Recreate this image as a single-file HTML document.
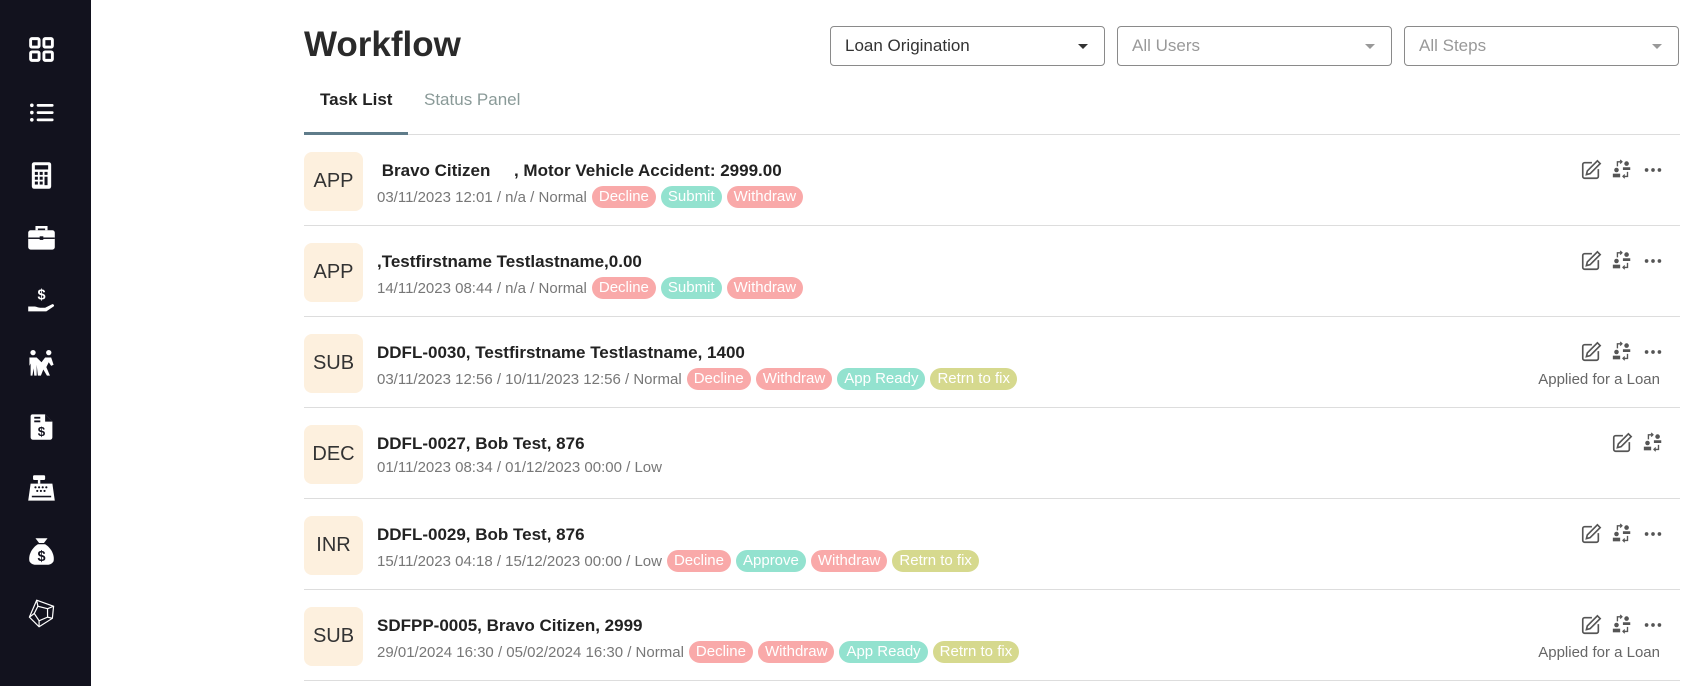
<!DOCTYPE html>
<html><head><meta charset="utf-8"><style>
*{margin:0;padding:0;box-sizing:border-box}
body{width:1698px;height:686px;overflow:hidden;background:#fff;font-family:"Liberation Sans",Arial,sans-serif;position:relative}
.sb{position:absolute;left:0;top:0;width:91px;height:686px;background:#12121e}
.sb svg{position:absolute;left:27px;width:29px;height:29px}
h1{position:absolute;left:304px;top:25px;font-size:35px;font-weight:bold;color:#2a2a2a}
.dd{position:absolute;top:26px;height:40px;width:275px;border:1px solid #8a8a8a;border-radius:4px;font-size:17px;padding:9px 14px;color:#999}
.dd:after{content:"";position:absolute;right:16px;top:17px;border-left:5px solid transparent;border-right:5px solid transparent;border-top:5px solid #999}
.dd.d1{color:#333}.dd.d1:after{border-top-color:#333}
.tab{position:absolute;top:90px;font-size:17px}
.ul{position:absolute;left:304px;top:134px;width:1376px;height:1px;background:#ddd}
.ul2{position:absolute;left:304px;top:132px;width:104px;height:3px;background:#5f7c8a}
.row{position:absolute;left:304px;width:1376px;height:91px;border-bottom:1px solid #ddd}
.bd{position:absolute;left:0;top:17px;width:59px;height:59px;border-radius:8px;background:#fdf0de;font-size:20px;color:#333;text-align:center;line-height:59px}
.t{position:absolute;left:73px;top:26px;font-size:17px;font-weight:bold;color:#222;white-space:pre}
.s{position:absolute;left:73px;top:51px;font-size:15px;color:#777;white-space:nowrap;display:flex;align-items:center}
.p{display:inline-block;height:22px;line-height:22px;border-radius:11px;padding:0 7px;color:#fff;margin-left:5px;font-size:15px}
.r{background:#f9a9a9}.g{background:#93e2cf}.y{background:#d6d98e}
.ic{position:absolute;top:24px;width:22px;height:22px}
.ap{position:absolute;right:20px;top:54px;font-size:15px;color:#666}
</style></head><body>
<div class="sb">
<svg style="top:35px" viewBox="0 0 24 24" fill="none" stroke="#fff" stroke-width="2.4"><rect x="3" y="3" width="7" height="7" rx="1"/><rect x="14" y="3" width="7" height="7" rx="1"/><rect x="3" y="14" width="7" height="7" rx="1"/><rect x="14" y="14" width="7" height="7" rx="1"/></svg>
<svg style="top:98px" viewBox="0 0 24 24" fill="#fff"><circle cx="4" cy="6" r="1.5"/><circle cx="4" cy="12" r="1.5"/><circle cx="4" cy="18" r="1.5"/><rect x="8" y="5" width="14" height="2.2" rx="1"/><rect x="8" y="11" width="14" height="2.2" rx="1"/><rect x="8" y="17" width="14" height="2.2" rx="1"/></svg>
<svg style="top:161px" viewBox="0 0 24 24"><rect x="4" y="1" width="16" height="22" rx="2" fill="#fff"/><rect x="6.5" y="3.5" width="11" height="3.5" fill="#12121e"/><g fill="#12121e"><rect x="6.5" y="9" width="2.5" height="2.5"/><rect x="10.5" y="9" width="2.5" height="2.5"/><rect x="14.5" y="9" width="2.5" height="2.5"/><rect x="6.5" y="13" width="2.5" height="2.5"/><rect x="10.5" y="13" width="2.5" height="2.5"/><rect x="14.5" y="13" width="2.5" height="7"/><rect x="6.5" y="17" width="2.5" height="2.5"/><rect x="10.5" y="17" width="2.5" height="2.5"/></g></svg>
<svg style="top:223px" viewBox="0 0 24 24"><path d="M8 6V3.5h8V6" stroke="#fff" stroke-width="2" fill="none"/><rect x="1" y="6" width="22" height="16" rx="2" fill="#fff"/><rect x="1" y="12" width="22" height="1.2" fill="#12121e"/><rect x="10.5" y="11" width="3" height="3" fill="#12121e"/></svg>
<svg style="top:286px" viewBox="0 0 24 24" fill="#fff"><text x="12" y="11" font-size="12" font-weight="bold" text-anchor="middle" fill="#fff" font-family="Liberation Sans">$</text><path d="M1 17h5c2 0 3 1 5 1h4l6-3c1 0 2 1 1 2l-6 4H1z"/></svg>
<svg style="top:349px" viewBox="0 0 24 24" fill="#fff"><circle cx="5" cy="3" r="2.2"/><circle cx="18" cy="3" r="2.2"/><path d="M2 7h6l4 4 3-4h5l2 6-2 1-2-3-2 4 3 7h-2.5l-3-5-2 5H9l-1-9v9H6l-.5-6-1 6H3V12L2 14z"/></svg>
<svg style="top:412px" viewBox="0 0 24 24"><path d="M4 2h11l6 6v13a2 2 0 0 1-2 2H5a2 2 0 0 1-2-2V4a2 2 0 0 1 1-2z" fill="#fff"/><path d="M15 2v6h6" fill="#12121e"/><rect x="6" y="4" width="5" height="1.5" fill="#12121e"/><rect x="6" y="7" width="5" height="1.5" fill="#12121e"/><text x="12" y="20" font-size="11" font-weight="bold" text-anchor="middle" fill="#12121e" font-family="Liberation Sans">$</text></svg>
<svg style="top:474px" viewBox="0 0 24 24" fill="#fff"><rect x="5" y="1" width="10" height="4" rx="1"/><rect x="9" y="5" width="2" height="3"/><path d="M3 8h18l2 14H1z"/><g fill="#12121e"><circle cx="7" cy="11" r=".9"/><circle cx="10" cy="11" r=".9"/><circle cx="13" cy="11" r=".9"/><circle cx="16" cy="11" r=".9"/><circle cx="8.5" cy="14" r=".9"/><circle cx="11.5" cy="14" r=".9"/><circle cx="14.5" cy="14" r=".9"/><rect x="4" y="18" width="16" height="1.3"/></g></svg>
<svg style="top:537px" viewBox="0 0 24 24" fill="#fff"><path d="M7 1h10l-3 4h-4z"/><path d="M9 6h6c5 3 8 9 7 14-1 2-3 3-5 3H7c-2 0-4-1-5-3C1 15 4 9 9 6z"/><text x="12" y="20" font-size="12" font-weight="bold" text-anchor="middle" fill="#12121e" font-family="Liberation Sans">$</text></svg>
<svg style="top:599px" viewBox="0 0 24 24" fill="none" stroke="#fff" stroke-width="1"><path d="M8 1l14 5-1 10-11 7-8-8z"/><path d="M9 6l8 2 0 7-7 3-4-6z"/><path d="M8 1l1 5M22 6l-5 2M21 16l-4-1M10 23l0-5M2 15l4-3"/></svg>
</div>
<h1>Workflow</h1>
<div class="dd d1" style="left:830px">Loan Origination</div>
<div class="dd" style="left:1117px">All Users</div>
<div class="dd" style="left:1404px">All Steps</div>
<div class="tab" style="left:320px;font-weight:bold;color:#222">Task List</div>
<div class="tab" style="left:424px;color:#8a9a98">Status Panel</div>
<div class="ul"></div><div class="ul2"></div>

<svg width="0" height="0" style="position:absolute"><defs>
<symbol id="ed" viewBox="0 0 24 24"><path d="M13 4H5a2 2 0 0 0-2 2v13a2 2 0 0 0 2 2h13a2 2 0 0 0 2-2v-8" fill="none" stroke="#555" stroke-width="1.8"/><path d="M19 2l3 3-11 11-4 1 1-4z" fill="none" stroke="#555" stroke-width="1.8"/></symbol>
<symbol id="us" viewBox="0 0 24 24" fill="#555"><circle cx="17" cy="5" r="2.5"/><path d="M13 9h8v3h-8z"/><circle cx="6" cy="12" r="2.5"/><path d="M2 16h8v4H2z"/><path d="M7 8V3h5" fill="none" stroke="#555" stroke-width="1.5"/><path d="M10 1l2 2-2 2" fill="none" stroke="#555" stroke-width="1.3"/><path d="M18 14v5h-5" fill="none" stroke="#555" stroke-width="1.5"/><path d="M15 17l-2 2 2 2" fill="none" stroke="#555" stroke-width="1.3"/></symbol>
<symbol id="dt" viewBox="0 0 24 24" fill="#555"><circle cx="5" cy="12" r="2"/><circle cx="12" cy="12" r="2"/><circle cx="19" cy="12" r="2"/></symbol>
</defs></svg>

<div class="row" style="top:135px"><div class="bd">APP</div><div class="t"> Bravo Citizen     , Motor Vehicle Accident: 2999.00</div><div class="s">03/11/2023 12:01 / n/a / Normal<span class="p r">Decline</span><span class="p g">Submit</span><span class="p r">Withdraw</span></div>
<svg class="ic" style="left:1276px"><use href="#ed"/></svg><svg class="ic" style="left:1307px"><use href="#us"/></svg><svg class="ic" style="left:1338px"><use href="#dt"/></svg></div>

<div class="row" style="top:226px"><div class="bd">APP</div><div class="t">,Testfirstname Testlastname,0.00</div><div class="s">14/11/2023 08:44 / n/a / Normal<span class="p r">Decline</span><span class="p g">Submit</span><span class="p r">Withdraw</span></div>
<svg class="ic" style="left:1276px"><use href="#ed"/></svg><svg class="ic" style="left:1307px"><use href="#us"/></svg><svg class="ic" style="left:1338px"><use href="#dt"/></svg></div>

<div class="row" style="top:317px"><div class="bd">SUB</div><div class="t">DDFL-0030, Testfirstname Testlastname, 1400</div><div class="s">03/11/2023 12:56 / 10/11/2023 12:56 / Normal<span class="p r">Decline</span><span class="p r">Withdraw</span><span class="p g">App Ready</span><span class="p y">Retrn to fix</span></div>
<svg class="ic" style="left:1276px"><use href="#ed"/></svg><svg class="ic" style="left:1307px"><use href="#us"/></svg><svg class="ic" style="left:1338px"><use href="#dt"/></svg><div class="ap">Applied for a Loan</div></div>

<div class="row" style="top:408px"><div class="bd">DEC</div><div class="t">DDFL-0027, Bob Test, 876</div><div class="s">01/11/2023 08:34 / 01/12/2023 00:00 / Low</div>
<svg class="ic" style="left:1307px"><use href="#ed"/></svg><svg class="ic" style="left:1338px"><use href="#us"/></svg></div>

<div class="row" style="top:499px"><div class="bd">INR</div><div class="t">DDFL-0029, Bob Test, 876</div><div class="s">15/11/2023 04:18 / 15/12/2023 00:00 / Low<span class="p r">Decline</span><span class="p g">Approve</span><span class="p r">Withdraw</span><span class="p y">Retrn to fix</span></div>
<svg class="ic" style="left:1276px"><use href="#ed"/></svg><svg class="ic" style="left:1307px"><use href="#us"/></svg><svg class="ic" style="left:1338px"><use href="#dt"/></svg></div>

<div class="row" style="top:590px"><div class="bd">SUB</div><div class="t">SDFPP-0005, Bravo Citizen, 2999</div><div class="s">29/01/2024 16:30 / 05/02/2024 16:30 / Normal<span class="p r">Decline</span><span class="p r">Withdraw</span><span class="p g">App Ready</span><span class="p y">Retrn to fix</span></div>
<svg class="ic" style="left:1276px"><use href="#ed"/></svg><svg class="ic" style="left:1307px"><use href="#us"/></svg><svg class="ic" style="left:1338px"><use href="#dt"/></svg><div class="ap">Applied for a Loan</div></div>
</body></html>
